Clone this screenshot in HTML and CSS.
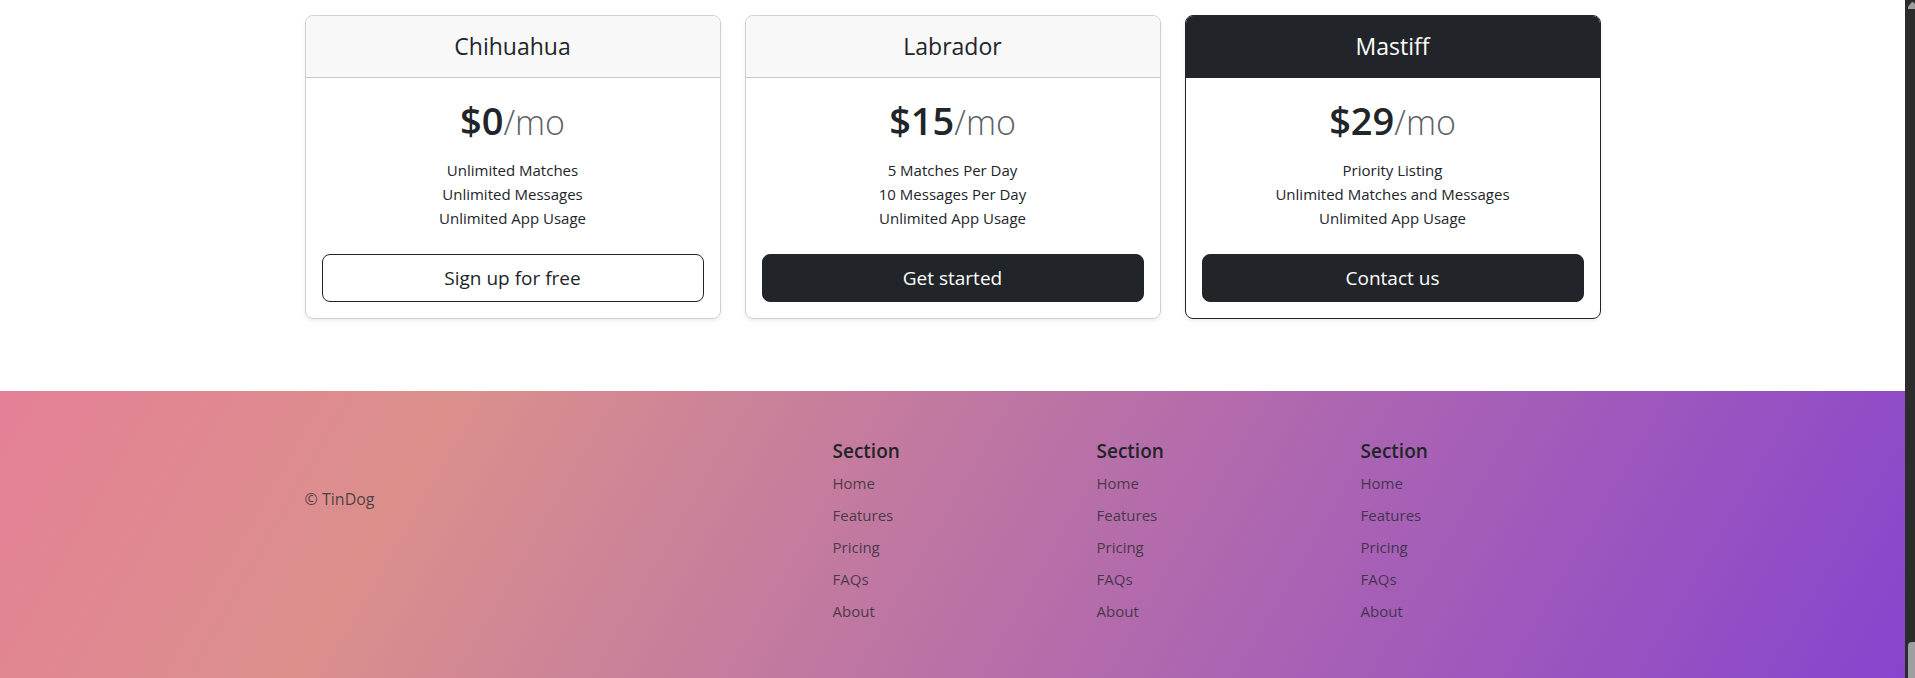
FILE: index.html
```html
<!DOCTYPE html>
<html lang="en">
<head>
<meta charset="utf-8">
<title>TinDog</title>
<link rel="stylesheet" href="styles.css">
</head>
<body>
<div class="page">
<main class="container pricing">
  <section class="card">
    <h4 class="card-header">Chihuahua</h4>
    <div class="card-body">
      <h1 class="price">$0<small>/mo</small></h1>
      <ul class="perks"><li>Unlimited Matches</li><li>Unlimited Messages</li><li>Unlimited App Usage</li></ul>
      <button type="button" class="btn btn-outline">Sign up for free</button>
    </div>
  </section>
  <section class="card">
    <h4 class="card-header">Labrador</h4>
    <div class="card-body">
      <h1 class="price">$15<small>/mo</small></h1>
      <ul class="perks"><li>5 Matches Per Day</li><li>10 Messages Per Day</li><li>Unlimited App Usage</li></ul>
      <button type="button" class="btn">Get started</button>
    </div>
  </section>
  <section class="card card-dark">
    <h4 class="card-header">Mastiff</h4>
    <div class="card-body">
      <h1 class="price">$29<small>/mo</small></h1>
      <ul class="perks"><li>Priority Listing</li><li>Unlimited Matches and Messages</li><li>Unlimited App Usage</li></ul>
      <button type="button" class="btn">Contact us</button>
    </div>
  </section>
</main>
<footer class="footer">
  <div class="container footer-grid">
    <p class="copyright">© TinDog</p>
    <nav class="links">
      <h5>Section</h5>
      <ul><li><a href="#">Home</a></li><li><a href="#">Features</a></li><li><a href="#">Pricing</a></li><li><a href="#">FAQs</a></li><li><a href="#">About</a></li></ul>
    </nav>
    <nav class="links">
      <h5>Section</h5>
      <ul><li><a href="#">Home</a></li><li><a href="#">Features</a></li><li><a href="#">Pricing</a></li><li><a href="#">FAQs</a></li><li><a href="#">About</a></li></ul>
    </nav>
    <nav class="links">
      <h5>Section</h5>
      <ul><li><a href="#">Home</a></li><li><a href="#">Features</a></li><li><a href="#">Pricing</a></li><li><a href="#">FAQs</a></li><li><a href="#">About</a></li></ul>
    </nav>
  </div>
</footer>
</div>
<div class="scrollbar" aria-hidden="true">
  <svg class="scroll-arrow" width="10" height="10" viewBox="0 0 10 10"><path d="M3 9V7L6 3Q7.500 1 9 3L10 4V9Z" fill="#9f9f9f"/></svg>
  <div class="scroll-thumb"></div>
</div>
</body>
</html>
```
FILE: styles.css
```css
* { box-sizing: border-box; }
body {
  display: flex;
  height: 100vh;
  margin: 0;
  overflow: hidden;
  background: #fff;
  color: #212529;
  font: 15px/24px "Segoe UI", "Open Sans", "Noto Sans", sans-serif;
}
h1, h4, h5, p, ul { margin: 0; }
ul { padding: 0; list-style: none; }
.page {
  display: flex;
  flex: 1;
  flex-direction: column;
}
.container {
  width: 100%;
  max-width: 1320px;
  margin: 0 auto;
  padding: 0 12px;
}
.pricing {
  display: grid;
  grid-template-columns: repeat(3, 1fr);
  gap: 24px;
  padding-top: 15px;
  padding-bottom: 72px;
  text-align: center;
}
.card {
  overflow: hidden;
  border: 1px solid #d0d1d2;
  border-radius: 8px;
  box-shadow: 0 2px 4px rgba(0, 0, 0, .075);
}
.card-header {
  padding: 16px;
  border-bottom: 1px solid #c9cacb;
  background: #f8f8f8;
  font-size: 23px;
  font-weight: 400;
  line-height: 29px;
}
.card-dark { border-color: #212529; }
.card-dark .card-header {
  border-color: #212529;
  background: #212529;
  color: #fff;
}
.card-body { padding: 16px; }
.price {
  padding-top: 2px;
  font-size: 38px;
  font-weight: 600;
  line-height: 48px;
}
.price small {
  color: #5e6165;
  font-size: 34px;
  font-weight: 300;
  line-height: 1;
}
.perks { margin: 14px 0 24px; }
.btn {
  width: 100%;
  padding: 8px 16px;
  border: 1px solid #212529;
  border-radius: 8px;
  background: #212529;
  color: #fff;
  font: inherit;
  font-size: 19px;
  line-height: 30px;
}
.btn-outline {
  background: #fff;
  color: #212529;
}
.footer {
  flex: 1;
  padding-top: 48px;
  background: linear-gradient(120deg, #e58097, #db908c 22%, #8844ce);
}
.footer-grid {
  display: grid;
  grid-template-columns: repeat(5, 1fr);
  gap: 24px;
}
.copyright {
  grid-column: span 2;
  padding-top: 48px;
  color: rgba(33, 37, 41, .75);
  font-size: 16px;
}
.links h5 {
  margin-bottom: 8px;
  font-size: 19px;
  font-weight: 600;
  line-height: 24px;
}
.links li { margin-bottom: 8px; }
.links a {
  color: rgba(33, 37, 41, .75);
  text-decoration: none;
}
.scrollbar {
  display: flex;
  flex-direction: column;
  justify-content: space-between;
  width: 10px;
  background: #2c2c2c;
}
.scroll-thumb {
  height: 36px;
  margin-left: 3px;
  border-top-left-radius: 4px;
  background: #9f9f9f;
}
```
